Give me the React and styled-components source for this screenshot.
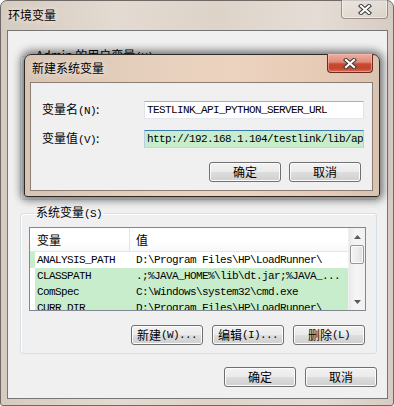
import React from 'react';
import styled, { createGlobalStyle } from 'styled-components';

const CJK = `"Noto Sans CJK SC", "Liberation Sans", sans-serif`;
const MONO = `"Liberation Mono", "Noto Sans CJK SC", monospace`;
const EYE = '#c7edcc';

const Global = createGlobalStyle`
  html, body { margin: 0; padding: 0; background: #ffffff; }
  body { width: 394px; height: 406px; overflow: hidden; font-family: ${CJK}; font-size: 12px; color: #000; }
  * { box-sizing: border-box; }
`;

const Window = styled.div`
  position: relative;
  width: 394px;
  height: 406px;
  border: 1px solid #6f6a66;
  border-radius: 7px 7px 3px 3px;
  background: linear-gradient(90deg, #d5cbc0 0%, #e3dad1 30%, #ddd3c9 55%, #e5ddd5 80%, #d6ccc2 100%);
  display: flex;
  flex-direction: column;
  padding: 0 5px 6px 6px;
`;

const TitleBar = styled.div`
  height: ${p => p.$h}px;
  display: flex;
  align-items: flex-start;
  flex-shrink: 0;
`;

const TitleText = styled.div`
  margin-top: ${p => p.$top}px;
  padding-left: ${p => p.$left}px;
  font-family: ${CJK};
  font-size: 12px;
  line-height: 16px;
  color: #000;
  text-shadow: 0 0 6px rgba(255, 255, 255, 0.9);
`;

const CloseBtn = styled.div`
  margin-left: auto;
  margin-top: -1px;
  width: ${p => p.$w}px;
  height: 19px;
  border: 1px solid ${p => (p.$active ? '#6e2a1f' : 'rgba(90,80,72,0.55)')};
  border-top: none;
  border-radius: 0 0 4px 4px;
  background: ${p =>
    p.$active
      ? 'linear-gradient(#eab0a2 0%, #e08a76 45%, #c94a33 55%, #c2452f 80%, #d5705a 100%)'
      : 'linear-gradient(rgba(255,255,255,0.35), rgba(255,255,255,0.1))'};
  box-shadow: inset 0 0 0 1px ${p => (p.$active ? 'rgba(255,200,190,0.5)' : 'rgba(255,255,255,0.45)')};
  display: flex;
  align-items: center;
  justify-content: center;
`;

const XIcon = () => (
  <svg width="14" height="11" viewBox="0 0 14 11">
    <path d="M3 2 L11 9 M11 2 L3 9" stroke="#3b3b3b" strokeWidth="4.2" strokeLinecap="square" fill="none" />
    <path d="M3 2 L11 9 M11 2 L3 9" stroke="#ffffff" strokeWidth="2.2" strokeLinecap="square" fill="none" />
  </svg>
);

const Client = styled.div`
  flex: 1;
  background: #f0f0f0;
  border: 1px solid #767676;
  display: flex;
  flex-direction: column;
  padding: 0 10px 0 12px;
`;

const Group = styled.fieldset`
  margin: ${p => p.$mt}px 0 0 0;
  min-width: 0;
  height: ${p => p.$h}px;
  border: 1px solid #d5dfe5;
  border-radius: 3px;
  padding: 6px 10px 0 8px;
  display: flex;
  flex-direction: column;
  box-shadow: inset 1px 1px 0 #ffffff;
`;

const Legend = styled.legend`
  margin-left: 5px;
  padding: 0 2px;
  font-family: ${CJK};
  font-size: 12px;
  line-height: 14px;
  color: #000;
`;

const Latin = styled.span`
  font-family: ${MONO};
  font-size: 11px;
  letter-spacing: -0.6px;
`;

const ListBox = styled.div`
  height: 84px;
  border: 1px solid #828790;
  background: #ffffff;
  display: flex;
  overflow: hidden;
`;

const Table = styled.div`
  flex: 1;
  display: flex;
  flex-direction: column;
  overflow: hidden;
`;

const HeaderRow = styled.div`
  height: 24px;
  flex-shrink: 0;
  display: flex;
  border-bottom: 1px solid #e5e5e5;
  background: linear-gradient(#ffffff 0%, #ffffff 55%, #f7f8fa 100%);
`;

const HeadCell = styled.div`
  width: ${p => (p.$w ? `${p.$w}px` : 'auto')};
  flex: ${p => (p.$w ? '0 0 auto' : '1')};
  padding-left: ${p => p.$pl}px;
  display: flex;
  align-items: center;
  border-right: ${p => (p.$w ? '1px solid #e5e5e5' : 'none')};
  font-family: ${CJK};
  font-size: 12px;
`;

const Row = styled.div`
  height: 16px;
  flex-shrink: 0;
  display: flex;
  align-items: center;
  border-left: 5px solid ${p => (p.$first ? EYE : '#ffffff')};
  background: ${p => (p.$first ? '#ffffff' : EYE)};
  white-space: nowrap;
`;

const Cell = styled.div`
  width: ${p => (p.$w ? `${p.$w}px` : 'auto')};
  flex: ${p => (p.$w ? '0 0 auto' : '1')};
  padding-left: ${p => p.$pl}px;
  overflow: hidden;
  font-family: ${MONO};
  font-size: 11px;
  letter-spacing: -0.6px;
  line-height: 16px;
  color: #000;
`;

const ScrollBar = styled.div`
  width: 17px;
  flex-shrink: 0;
  display: flex;
  flex-direction: column;
  background: linear-gradient(90deg, #e9e9e9 0%, #f5f5f5 40%, #f1f1f1 100%);
  border-left: 1px solid #f0f0f0;
`;

const ArrowBox = styled.div`
  height: 17px;
  flex-shrink: 0;
  display: flex;
  align-items: center;
  justify-content: center;
`;

const Thumb = styled.div`
  height: 19px;
  margin: 0 1px;
  flex-shrink: 0;
  border: 1px solid #979797;
  border-radius: 2px;
  background: linear-gradient(90deg, #f4f4f4 0%, #ececec 50%, #dedede 100%);
  box-shadow: inset 0 0 0 1px #fafafa;
`;

const Track = styled.div`
  flex: 1;
`;

const Arrow = ({ down }) => (
  <svg width="7" height="4" viewBox="0 0 7 4">
    <path d={down ? 'M0 0 H7 L3.5 4 Z' : 'M0 4 H7 L3.5 0 Z'} fill="#5a5a5a" />
  </svg>
);

const ButtonRow = styled.div`
  display: flex;
  justify-content: flex-end;
  gap: ${p => p.$gap}px;
  margin-top: ${p => p.$mt}px;
  margin-right: ${p => p.$mr || 0}px;
  flex-shrink: 0;
`;

const Button = styled.div`
  width: 72px;
  height: 20px;
  border: 1px solid #707070;
  border-radius: 3px;
  background: linear-gradient(#f2f2f2 0%, #ebebeb 48%, #dddddd 52%, #cfcfcf 100%);
  box-shadow: inset 0 0 0 1px #fcfcfc;
  display: flex;
  align-items: center;
  justify-content: center;
  font-family: ${CJK};
  font-size: 12px;
  line-height: 14px;
  color: #000;
`;

const Dialog = styled.div`
  position: absolute;
  left: 23px;
  top: 53px;
  width: 356px;
  height: 143px;
  border: 1px solid #2e2a27;
  border-radius: 7px 7px 3px 3px;
  background: linear-gradient(90deg, #d7c4b4 0%, #e6d0bd 35%, #ecd3bf 60%, #e6cab5 85%, #d9c3b1 100%);
  box-shadow: 0 0 9px 3px rgba(0, 0, 0, 0.55);
  display: flex;
  flex-direction: column;
  padding: 0 6px 5px 5px;
`;

const DialogClient = styled.div`
  flex: 1;
  background: #f0f0f0;
  border: 1px solid #8a7e74;
  padding: 17px 8px 0 11px;
  display: flex;
  flex-direction: column;
`;

const Form = styled.div`
  display: grid;
  grid-template-columns: 102px 1fr;
  row-gap: 9px;
  align-items: center;
`;

const Label = styled.div`
  font-family: ${CJK};
  font-size: 12px;
  line-height: 18px;
`;

const TextBox = styled.input`
  height: 18px;
  width: 100%;
  margin: 0;
  padding: 0 0 0 2px;
  border: 1px solid ${p => (p.$focus ? '#5b9bd5' : '#abadb3')};
  border-top-color: ${p => (p.$focus ? '#3d7bad' : '#abadb3')};
  border-left-color: ${p => (p.$focus ? '#b5cfe7' : '#e2e3ea')};
  border-right-color: ${p => (p.$focus ? '#b5cfe7' : '#e2e3ea')};
  border-bottom-color: ${p => (p.$focus ? '#b7d9ed' : '#e3e9ef')};
  background: ${p => (p.$focus ? EYE : '#ffffff')};
  font-family: ${MONO};
  font-size: 11px;
  letter-spacing: -0.6px;
  color: #000;
  outline: none;
`;

const rows = [
  ['ANALYSIS_PATH', 'D:\\Program Files\\HP\\LoadRunner\\'],
  ['CLASSPATH', '.;%JAVA_HOME%\\lib\\dt.jar;%JAVA_...'],
  ['ComSpec', 'C:\\Windows\\system32\\cmd.exe'],
  ['CURR_DIR', 'D:\\Program Files\\HP\\LoadRunner\\'],
];

export default function App() {
  return (
    <>
      <Global />
      <Window>
        <TitleBar $h={29}>
          <TitleText $top={6} $left={1}>环境变量</TitleText>
          <CloseBtn $w={47}>
            <XIcon />
          </CloseBtn>
        </TitleBar>
        <Client>
          <Group $mt={17} $h={152}>
            <Legend>Admin 的用户变量<Latin>(U)</Latin></Legend>
          </Group>
          <Group $mt={5} $h={149}>
            <Legend>系统变量<Latin>(S)</Latin></Legend>
            <ListBox>
              <Table>
                <HeaderRow>
                  <HeadCell $w={100} $pl={7}>变量</HeadCell>
                  <HeadCell $pl={6}>值</HeadCell>
                </HeaderRow>
                {rows.map(([k, v], i) => (
                  <Row key={k} $first={i === 0}>
                    <Cell $w={95} $pl={2}>{k}</Cell>
                    <Cell $pl={6}>{v}</Cell>
                  </Row>
                ))}
              </Table>
              <ScrollBar>
                <ArrowBox><Arrow /></ArrowBox>
                <Thumb />
                <Track />
                <ArrowBox><Arrow down /></ArrowBox>
              </ScrollBar>
            </ListBox>
            <ButtonRow $gap={9} $mt={14} $mr={1}>
              <Button>新建<Latin>(W)...</Latin></Button>
              <Button>编辑<Latin>(I)...</Latin></Button>
              <Button>删除<Latin>(L)</Latin></Button>
            </ButtonRow>
          </Group>
          <ButtonRow $gap={9} $mt={13}>
            <Button>确定</Button>
            <Button>取消</Button>
          </ButtonRow>
        </Client>

        <Dialog>
          <TitleBar $h={27}>
            <TitleText $top={5} $left={2}>新建系统变量</TitleText>
            <CloseBtn $w={46} $active>
              <XIcon />
            </CloseBtn>
          </TitleBar>
          <DialogClient>
            <Form>
              <Label>变量名<Latin>(N)</Latin>:</Label>
              <TextBox readOnly value="TESTLINK_API_PYTHON_SERVER_URL" />
              <Label>变量值<Latin>(V)</Latin>:</Label>
              <TextBox $focus readOnly value="http://192.168.1.104/testlink/lib/api/xmlrpc/v1/xmlrpc.php" />
            </Form>
            <ButtonRow $gap={8} $mt={13} $mr={3}>
              <Button>确定</Button>
              <Button>取消</Button>
            </ButtonRow>
          </DialogClient>
        </Dialog>
      </Window>
    </>
  );
}
